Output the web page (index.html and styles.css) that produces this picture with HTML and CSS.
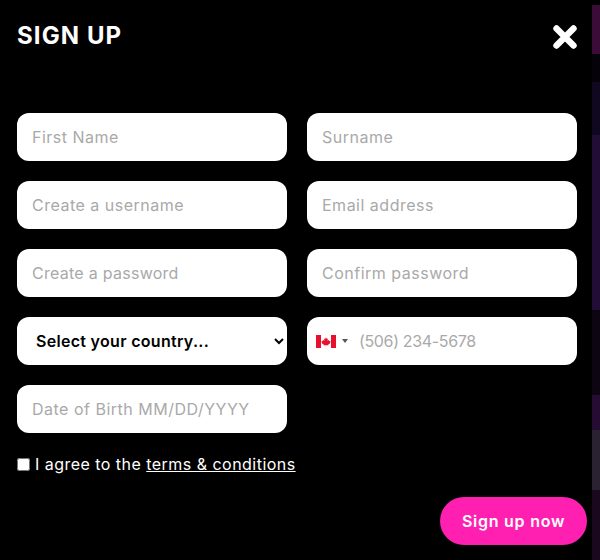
FILE: index.html
```html
<!DOCTYPE html>
<html lang="en">
<head>
<meta charset="utf-8">
<title>Sign up</title>
<link rel="stylesheet" href="styles.css">
</head>
<body>
<div class="backdrop">
  <form class="modal">
    <header class="modal-head">
      <h1 class="title">SIGN UP</h1>
      <button class="close" type="button" aria-label="Close">
        <svg viewBox="0 0 24 24" width="24" height="24"><path d="M3.5 3.5 L20.5 20.5 M20.5 3.5 L3.5 20.5" stroke="#fff" stroke-width="6.4" stroke-linecap="round"/></svg>
      </button>
    </header>
    <div class="grid">
      <input class="field" placeholder="First Name">
      <input class="field" placeholder="Surname">
      <input class="field" placeholder="Create a username">
      <input class="field" placeholder="Email address">
      <input class="field tight" placeholder="Create a password">
      <input class="field" placeholder="Confirm password">
      <select class="field select"><option>Select your country...</option></select>
      <div class="field phone">
        <span class="flag"><svg viewBox="0 0 20 13" width="20" height="13"><rect width="20" height="13" fill="#fff"/><rect width="5" height="13" fill="#e8112d"/><rect x="15" width="5" height="13" fill="#e8112d"/><path d="M10 2.2 L10.9 3.9 L12 3.4 L11.5 5.8 L12.8 5 L13.3 6 L14.6 5.9 L14 7.6 L14.5 8 L12.1 9.7 L12.4 10.4 L10.2 10.1 V11.6 H9.8 V10.1 L7.6 10.4 L7.9 9.7 L5.5 8 L6 7.6 L5.4 5.9 L6.7 6 L7.2 5 L8.5 5.8 L8 3.4 L9.1 3.9 Z" fill="#e8112d"/></svg></span>
        <span class="caret"></span>
        <input class="phone-input" placeholder="(506) 234-5678">
      </div>
      <input class="field" placeholder="Date of Birth MM/DD/YYYY">
    </div>
    <label class="agree"><input class="check" type="checkbox"><span>I agree to the <a class="terms" href="#">terms &amp; conditions</a></span></label>
    <div class="actions"><button class="submit" type="button">Sign up now</button></div>
  </form>
</div>
</body>
</html>
```
FILE: styles.css
```css
* { box-sizing: border-box; }
html, body { margin: 0; height: 100%; background: #000; }
body { font-family: "Inter", "Liberation Sans", sans-serif; overflow: hidden; }
.backdrop { width: 600px; height: 560px; background: linear-gradient(180deg, #000 0 5px, #3a0c37 5px 54px, #060209 54px 82px, #100720 82px 135px, #220d36 135px 310px, #0e0512 310px 395px, #260c33 395px 430px, #2a2230 430px 490px, #1a081e 490px 560px); }
.modal { width: 592px; height: 560px; background: #000; padding: 0 15px 0 17px; color: #fff; display: flex; flex-direction: column; }
.modal-head { display: flex; justify-content: space-between; align-items: flex-start; height: 113px; padding-top: 20px; }
.title { margin: 0; font-size: 24px; line-height: 32px; font-weight: 700; letter-spacing: 1.1px; }
.close { background: none; border: 0; padding: 0; margin: 5px 0 0 0; width: 24px; height: 24px; }
.close svg { display: block; }
.grid { display: grid; grid-template-columns: 270px 270px; column-gap: 20px; row-gap: 20px; grid-auto-rows: 48px; }
.field { width: 100%; height: 48px; border: 0; border-radius: 12px; background: #fff; padding: 0 15px; font-family: inherit; font-size: 16px; letter-spacing: .5px; color: #000; outline: none; }
.tight { letter-spacing: .27px; }
.field::placeholder, .phone-input::placeholder { color: #a9a9a9; opacity: 1; }
.select { font-weight: 600; letter-spacing: .3px; }
.phone { display: flex; align-items: center; padding: 0 0 0 9px; }
.flag { display: block; width: 20px; height: 13px; }
.flag svg { display: block; }
.caret { width: 0; height: 0; margin-left: 6px; border-left: 3px solid transparent; border-right: 3px solid transparent; border-top: 4px solid #555; }
.phone-input { flex: 1; min-width: 0; border: 0; background: none; outline: none; margin-left: 11px; padding: 0; font-family: inherit; font-size: 16px; letter-spacing: -.35px; }
.agree { display: flex; align-items: center; margin-top: 20px; font-size: 16px; line-height: 22px; letter-spacing: .47px; }
.check { width: 13px; height: 13px; margin: 0 5px 0 0; }
.terms { color: #fff; text-decoration: underline; }
.actions { display: flex; justify-content: flex-end; margin-top: 22px; margin-right: -10px; }
.submit { width: 147px; height: 48px; border: 0; border-radius: 24px; background: #ff1fb1; color: #fff; font-family: inherit; font-size: 16px; font-weight: 600; letter-spacing: .75px; }
```
